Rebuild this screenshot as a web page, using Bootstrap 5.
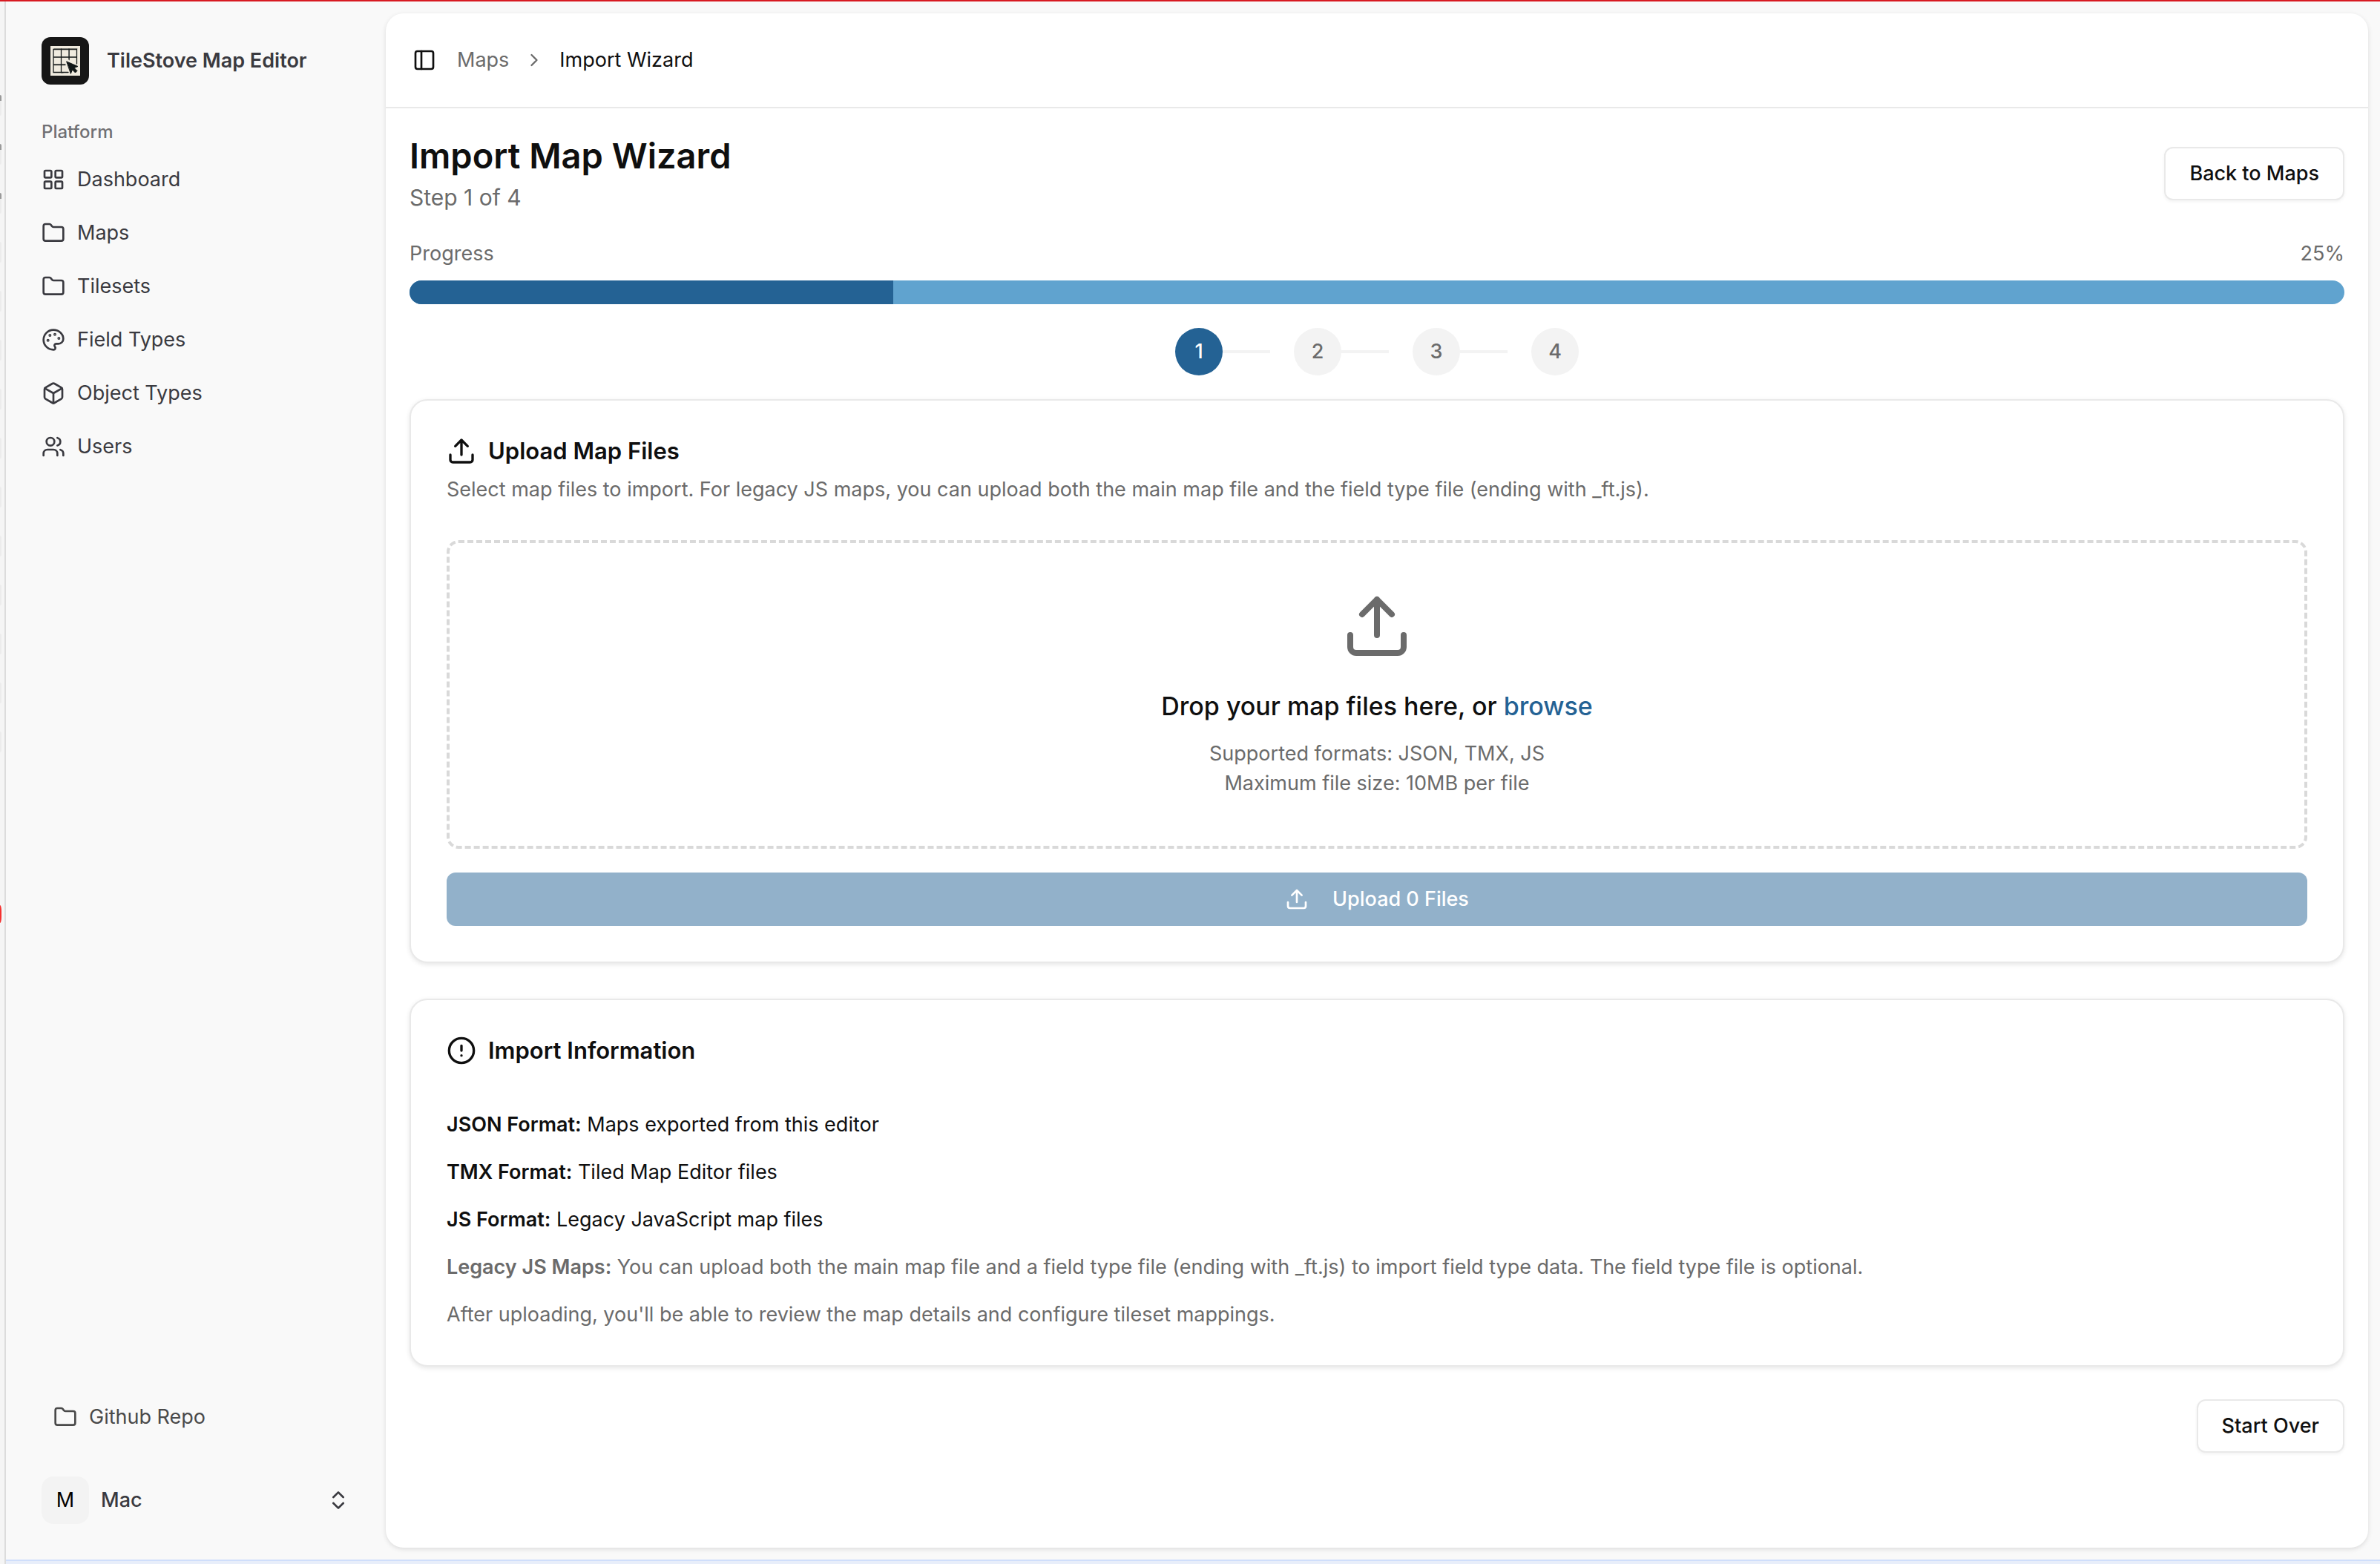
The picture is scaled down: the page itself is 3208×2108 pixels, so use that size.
<!DOCTYPE html>
<html lang="en">
<head>
<meta charset="utf-8">
<meta name="viewport" content="width=device-width, initial-scale=1">
<title>Import Wizard - TileStove Map Editor</title>
<link href="https://cdn.jsdelivr.net/npm/bootstrap@5.3.0/dist/css/bootstrap.min.css" rel="stylesheet">
<style>
  :root { --ink: #0f0f0f; --muted: #6b6b6b; --side: #3a3a40; --line: #e9e9e9; --soft: #f3f3f3; --brand: #246294; }
  body { font-family: Inter, "Liberation Sans", sans-serif; font-size: 27px; line-height: 40px; color: var(--ink); background: #f9f9f9; border-top: 2px solid #d81b22; }
  svg { display: block; flex: none; fill: none; stroke: currentColor; stroke-width: 2; stroke-linecap: round; stroke-linejoin: round; }
  .ico { width: 32px; height: 32px; }
  .ico-md { width: 40px; height: 40px; }
  .ico-lg { width: 96px; height: 96px; }
  .g-8 { gap: 8px; } .g-16 { gap: 16px; } .g-32 { gap: 32px; } .g-48 { gap: 48px; }
  .muted { color: var(--muted); }
  a { color: inherit; text-decoration: none; }

  .edge { width: 8px; background: #f5f5f5; border-right: 2px solid #dcdcdc; padding-top: 126px; gap: 38px; }
  .edge i { width: 2px; height: 28px; background: #ececec; border-radius: 0 2px 2px 0; }
  .edge i.tip { border-top: 8px solid #9a9a9a; }
  .edge b { position: absolute; left: 0; top: 1220px; width: 2px; height: 24px; background: #f5302f; border-radius: 0 2px 2px 0 / 0 8px 8px 0; }

  .stage { border-bottom: 4px solid #e8eefa; }
  .stage-in { border-bottom: 2px solid #cfdefb; }
  .side { width: 512px; padding: 48px; color: var(--side); }
  .logo { width: 64px; height: 64px; border-radius: 12px; background: #171717; }
  .logo svg { width: 40px; height: 40px; }
  .brand-row { gap: 24px; }
  .group-name { font-size: 24px; line-height: 32px; color: #707074; margin: 48px 0 0; }
  .side-nav { margin-top: 16px; gap: 8px; }
  .side-nav a { height: 64px; gap: 16px; }
  .repo { height: 64px; gap: 16px; padding: 0 16px; color: #4a4a4a; margin-bottom: 48px; }
  .user { padding: 0; border: 0; background: none; gap: 16px; color: var(--side); }
  .avatar { width: 64px; height: 64px; border-radius: 16px; background: var(--soft); color: #000; }

  .inset { background: #fff; border-radius: 24px; margin: 16px 16px 16px 0; box-shadow: 0 2px 6px rgba(0,0,0,.12); }
  .topbar { height: 128px; border-bottom: 2px solid var(--line); padding: 0 36px; }
  .topbar button { border: 0; padding: 0; background: none; margin-right: 28px; color: var(--ink); }
  .breadcrumb { gap: 20px; }
  .chev { width: 28px; height: 28px; }
  .content { padding: 32px; }
  h1 { font-size: 47px; line-height: 64px; font-weight: 600; margin: 0; }
  .step-of { font-size: 30px; line-height: 48px; margin: 0; }
  .btn-line { height: 72px; padding: 0 32px; border: 2px solid var(--line); border-radius: 12px; background: #fff; color: var(--ink); font-size: 27px; font-weight: 500; box-shadow: 0 2px 4px rgba(0,0,0,.05); }
  .progress { height: 32px; border-radius: 16px; background: #60a3cf; margin-top: 16px; }
  .progress-bar { background: var(--brand); }
  .dot { width: 64px; height: 64px; border-radius: 50%; background: var(--soft); color: var(--muted); font-weight: 500; }
  .dot.on { background: var(--brand); color: #fff; }
  .dash { width: 64px; height: 4px; background: var(--soft); margin-right: 32px; }
  .panel { border: 2px solid var(--line); border-radius: 24px; padding: 48px; background: #fff; box-shadow: 0 2px 6px rgba(0,0,0,.1); }
  h2 { font-size: 31px; line-height: 40px; font-weight: 600; margin: 0; }
  .panel-note { margin: 12px 0 0; }
  .drop { border: 4px dashed #d9d9d9; border-radius: 16px; padding: 64px; margin: 48px 0 32px; }
  .drop-title { font-size: 34px; line-height: 56px; font-weight: 500; margin: 32px 0 16px; }
  .drop-title label { color: var(--brand); cursor: pointer; }
  .btn-up { height: 72px; border: 0; border-radius: 12px; background: var(--brand); color: #fff; font-size: 27px; font-weight: 500; gap: 32px; }
  .btn-up:disabled { background: #92b1ca; color: #fff; opacity: 1; }
  .facts { margin-top: 60px; gap: 24px; }
  .foot { margin-top: 12px; }
  strong { font-weight: 600; }
</style>
</head>
<body class="d-flex min-vh-100">
<div class="edge d-flex flex-column flex-shrink-0" aria-hidden="true">
  <i class="tip"></i><i class="tip"></i><i class="tip"></i><i></i><i></i><i></i><i></i><i></i><i></i><i></i><i></i><i></i><i></i><i></i><b></b>
</div>
<div class="stage d-flex flex-grow-1">
<div class="stage-in d-flex flex-grow-1">
  <aside class="side d-flex flex-column flex-shrink-0">
    <a href="#" class="brand-row d-flex align-items-center">
      <span class="logo d-flex align-items-center justify-content-center">
        <svg viewBox="0 0 40 40" stroke-linecap="butt">
          <rect width="40" height="40" fill="#f0ebdf" stroke="none"/>
          <g stroke="#9a9a92" stroke-width="1"><path d="M5 3.500h31M16 36.500h1M25.500 5v14M5 26h15"/></g>
          <g stroke="#151a1a" stroke-width="1.300" stroke-linejoin="miter"><path d="M24 35.500H4V4.500h31.500V24M4 15h31.500M4 25h16M14.500 4v32M25 4v14"/></g>
          <path d="M22 21l15 6.500-5 2 4 4-2.500 2.500-4-4-2 5z" fill="#101616" stroke="#101616" stroke-width="1"/>
        </svg>
      </span>
      <span class="fw-semibold">TileStove Map Editor</span>
    </a>
    <p class="group-name fw-medium">Platform</p>
    <nav class="side-nav d-flex flex-column">
      <a href="#" class="d-flex align-items-center"><svg class="ico" viewBox="0 0 24 24"><rect width="7" height="7" x="3" y="3" rx="1"/><rect width="7" height="7" x="14" y="3" rx="1"/><rect width="7" height="7" x="14" y="14" rx="1"/><rect width="7" height="7" x="3" y="14" rx="1"/></svg>Dashboard</a>
      <a href="#" class="d-flex align-items-center"><svg class="ico" viewBox="0 0 24 24"><path d="M20 20a2 2 0 0 0 2-2V8a2 2 0 0 0-2-2h-7.900a2 2 0 0 1-1.690-.9L9.600 3.900A2 2 0 0 0 7.930 3H4a2 2 0 0 0-2 2v13a2 2 0 0 0 2 2Z"/></svg>Maps</a>
      <a href="#" class="d-flex align-items-center"><svg class="ico" viewBox="0 0 24 24"><path d="M20 20a2 2 0 0 0 2-2V8a2 2 0 0 0-2-2h-7.900a2 2 0 0 1-1.690-.9L9.600 3.900A2 2 0 0 0 7.930 3H4a2 2 0 0 0-2 2v13a2 2 0 0 0 2 2Z"/></svg>Tilesets</a>
      <a href="#" class="d-flex align-items-center"><svg class="ico" viewBox="0 0 24 24"><path d="M12 22a1 1 0 0 1 0-20 10 9 0 0 1 10 9 5 5 0 0 1-5 5h-2.250a1.750 1.750 0 0 0-1.400 2.800l.3.400a1.750 1.750 0 0 1-1.400 2.800z"/><g fill="currentColor"><circle cx="13.500" cy="6.500" r=".5"/><circle cx="17.500" cy="10.500" r=".5"/><circle cx="6.500" cy="12.500" r=".5"/><circle cx="8.500" cy="7.500" r=".5"/></g></svg>Field Types</a>
      <a href="#" class="d-flex align-items-center"><svg class="ico" viewBox="0 0 24 24"><path d="M21 8a2 2 0 0 0-1-1.730l-7-4a2 2 0 0 0-2 0l-7 4A2 2 0 0 0 3 8v8a2 2 0 0 0 1 1.730l7 4a2 2 0 0 0 2 0l7-4A2 2 0 0 0 21 16Z"/><path d="m3.300 7 8.700 5 8.700-5M12 22V12"/></svg>Object Types</a>
      <a href="#" class="d-flex align-items-center"><svg class="ico" viewBox="0 0 24 24"><path d="M16 21v-2a4 4 0 0 0-4-4H6a4 4 0 0 0-4 4v2"/><circle cx="9" cy="7" r="4"/><path d="M22 21v-2a4 4 0 0 0-3-3.870M16 3.130a4 4 0 0 1 0 7.750"/></svg>Users</a>
    </nav>
    <a href="#" class="repo d-flex align-items-center mt-auto"><svg class="ico" viewBox="0 0 24 24"><path d="M20 20a2 2 0 0 0 2-2V8a2 2 0 0 0-2-2h-7.900a2 2 0 0 1-1.690-.9L9.600 3.900A2 2 0 0 0 7.930 3H4a2 2 0 0 0-2 2v13a2 2 0 0 0 2 2Z"/></svg>Github Repo</a>
    <button type="button" class="user d-flex align-items-center">
      <span class="avatar d-flex align-items-center justify-content-center">M</span>
      <span class="fw-medium me-auto">Mac</span>
      <svg class="ico" viewBox="0 0 24 24"><path d="m7 15 5 5 5-5M7 9l5-5 5 5"/></svg>
    </button>
  </aside>

  <main class="inset flex-grow-1">
    <header class="topbar d-flex align-items-center">
      <button type="button" aria-label="Toggle sidebar"><svg class="ico" viewBox="0 0 24 24"><rect width="18" height="18" x="3" y="3" rx="2"/><path d="M9 3v18"/></svg></button>
      <nav aria-label="Breadcrumb">
        <div class="breadcrumb d-flex align-items-center mb-0">
          <a href="#" class="muted">Maps</a>
          <svg class="chev muted" viewBox="0 0 24 24"><path d="m9 18 6-6-6-6"/></svg>
          <span aria-current="page">Import Wizard</span>
        </div>
      </nav>
    </header>

    <div class="content d-flex flex-column g-32">
      <div class="d-flex align-items-center justify-content-between">
        <div>
          <h1>Import Map Wizard</h1>
          <p class="step-of muted">Step 1 of 4</p>
        </div>
        <button type="button" class="btn btn-line">Back to Maps</button>
      </div>

      <div>
        <div class="d-flex justify-content-between muted"><span>Progress</span><span>25%</span></div>
        <div class="progress" role="progressbar" aria-label="Progress" aria-valuenow="25" aria-valuemin="0" aria-valuemax="100"><div class="progress-bar" style="width:25%"></div></div>
      </div>

      <div class="d-flex align-items-center justify-content-center">
        <span class="dot on d-flex align-items-center justify-content-center">1</span><span class="dash"></span>
        <span class="dot d-flex align-items-center justify-content-center">2</span><span class="dash"></span>
        <span class="dot d-flex align-items-center justify-content-center">3</span><span class="dash"></span>
        <span class="dot d-flex align-items-center justify-content-center">4</span>
      </div>

      <div class="d-flex flex-column g-48">
        <section class="panel">
          <div class="d-flex align-items-center g-16">
            <svg class="ico-md" viewBox="0 0 24 24"><path d="M21 15v4a2 2 0 0 1-2 2H5a2 2 0 0 1-2-2v-4M17 8l-5-5-5 5M12 3v12"/></svg>
            <h2>Upload Map Files</h2>
          </div>
          <p class="panel-note muted">Select map files to import. For legacy JS maps, you can upload both the main map file and the field type file (ending with _ft.js).</p>
          <div class="drop text-center">
            <svg class="ico-lg muted mx-auto" viewBox="0 0 24 24"><path d="M21 15v4a2 2 0 0 1-2 2H5a2 2 0 0 1-2-2v-4M17 8l-5-5-5 5M12 3v12"/></svg>
            <p class="drop-title">Drop your map files here, or <label for="mapFiles">browse</label></p>
            <input type="file" id="mapFiles" class="d-none" multiple>
            <p class="muted mb-0">Supported formats: JSON, TMX, JS<br>Maximum file size: 10MB per file</p>
          </div>
          <button type="button" class="btn btn-up w-100 d-flex align-items-center justify-content-center" disabled>
            <svg class="ico" viewBox="0 0 24 24"><path d="M21 15v4a2 2 0 0 1-2 2H5a2 2 0 0 1-2-2v-4M17 8l-5-5-5 5M12 3v12"/></svg>Upload 0 Files
          </button>
        </section>

        <section class="panel">
          <div class="d-flex align-items-center g-16">
            <svg class="ico-md" viewBox="0 0 24 24"><circle cx="12" cy="12" r="10"/><path d="M12 8v4M12 16h.01"/></svg>
            <h2>Import Information</h2>
          </div>
          <div class="facts d-flex flex-column">
            <div><strong>JSON Format:</strong> Maps exported from this editor</div>
            <div><strong>TMX Format:</strong> Tiled Map Editor files</div>
            <div><strong>JS Format:</strong> Legacy JavaScript map files</div>
            <div class="muted"><strong>Legacy JS Maps:</strong> You can upload both the main map file and a field type file (ending with _ft.js) to import field type data. The field type file is optional.</div>
            <div class="muted">After uploading, you'll be able to review the map details and configure tileset mappings.</div>
          </div>
        </section>
      </div>

      <div class="foot d-flex justify-content-end"><button type="button" class="btn btn-line">Start Over</button></div>
    </div>
  </main>
</div>
</div>
<script src="https://cdn.jsdelivr.net/npm/bootstrap@5.3.0/dist/js/bootstrap.bundle.min.js"></script>
</body>
</html>
